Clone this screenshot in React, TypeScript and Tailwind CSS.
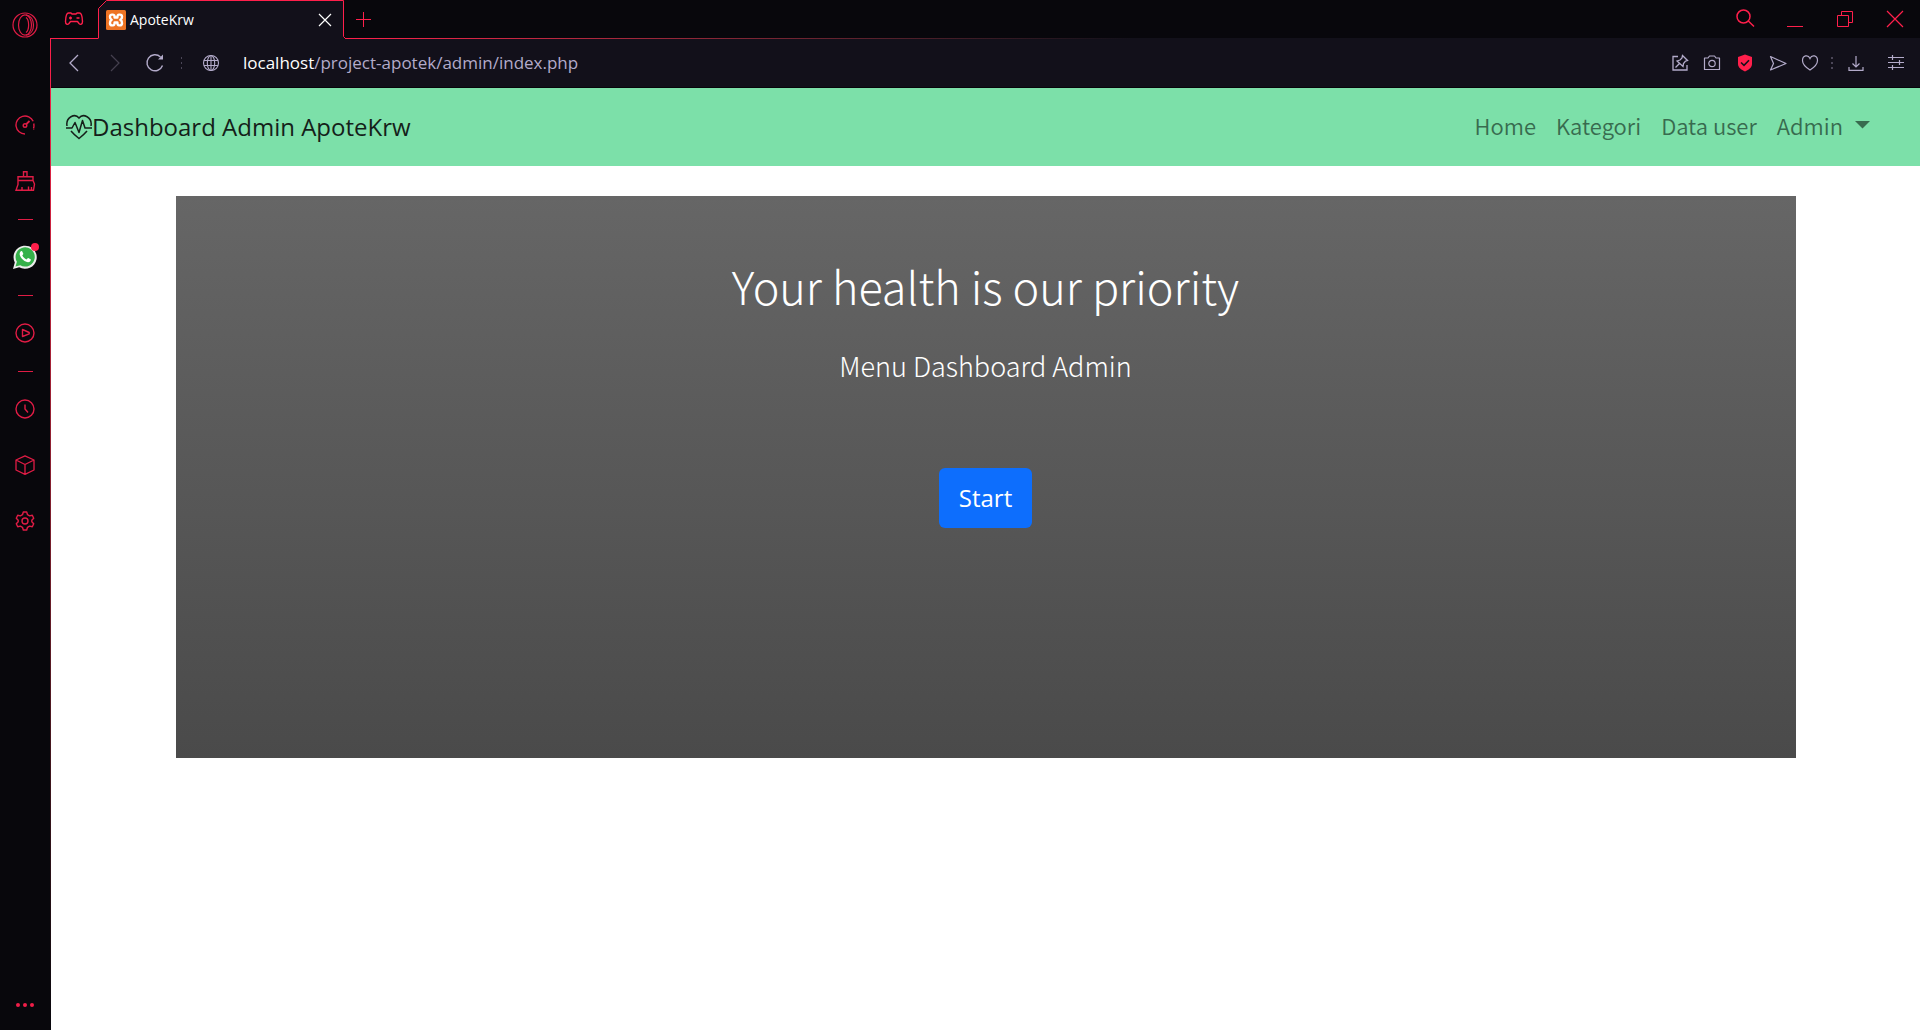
import type { ReactNode } from "react";

const segoe = "font-['Open_Sans','Noto_Sans',sans-serif]";
const source = "font-['Noto_Sans_CJK_SC','Noto_Sans',sans-serif]";

function Icon({ size = 20, stroke = 1, children }: { size?: number; stroke?: number; children: ReactNode }) {
  return (
    <svg
      width={size}
      height={size}
      viewBox={`0 0 ${size} ${size}`}
      fill="none"
      stroke="currentColor"
      strokeWidth={stroke}
      aria-hidden="true"
    >
      {children}
    </svg>
  );
}

function SideButton({ label, children }: { label: string; children: ReactNode }) {
  return (
    <button type="button" aria-label={label} className="flex h-14 w-full shrink-0 items-center justify-center">
      {children}
    </button>
  );
}

function Divider() {
  return (
    <div className="flex h-5 w-full shrink-0 items-center justify-center">
      <div className="h-px w-[15px] bg-[#e01c45]" />
    </div>
  );
}

function Sidebar() {
  return (
    <aside className="flex w-[50px] shrink-0 flex-col items-center bg-[#08070c] text-[#e01c45]">
      <button type="button" aria-label="Opera menu" className="flex h-[50px] w-full shrink-0 items-center justify-center">
        <Icon size={26} stroke={1.2}>
          <circle cx="13" cy="13" r="12" />
          <ellipse cx="13" cy="13" rx="6.5" ry="10.2" />
          <path d="M14 2.800C19 3.500 21.500 8 21.500 13S19 22.500 14 23.200M14 5.500C17.500 8 17.500 18 14 20.500" />
        </Icon>
      </button>
      <nav className="mt-[47px] flex w-full flex-col">
        <SideButton label="GX Control">
          <Icon stroke={1.4}>
            <path d="M10 19A9 9 0 1 1 18.200 6.300M18.700 8.500C19.100 10 19 11 18.800 12" />
            <path d="M18.700 12V15" strokeDasharray="1.500 1" />
            <circle cx="10" cy="10.500" r="1.800" />
            <path d="M11.300 9.200L14.500 6" strokeWidth="1.800" />
          </Icon>
        </SideButton>
        <SideButton label="GX Cleaner">
          <Icon size={22} stroke={1.4}>
            <path d="M9.500 6.500V1.700H13V6.500M4 10.500V6.700H19V10.500M4 10.500H19L20.500 14L19.500 20.300H2L4 14.500ZM8 20V17M14.500 20V16.500M17.500 20V17" />
          </Icon>
        </SideButton>
        <Divider />
        <SideButton label="WhatsApp">
          <svg width="28" height="28" viewBox="0 0 28 28" aria-hidden="true">
            <path d="M2 26L3.800 19.500A11.600 11.600 0 1 1 8.200 24.200Z" fill="#ececec" />
            <path d="M4.500 23.500L5.900 18.800A9.600 9.600 0 1 1 9.300 22.200Z" fill="#35b14a" />
            <path
              d="M9.800 8.200C10.300 7.800 11 7.900 11.300 8.500L12.300 10.700C12.500 11.200 11.500 12.100 11.300 12.500C12.200 14.400 13.600 15.600 15.600 16.400C16.100 16 16.800 14.900 17.200 15L19.600 16.200C20.200 16.600 19.600 18.200 18.800 18.800C17.200 19.800 14.500 19 12.300 17.100C9.500 14.700 7.100 10.800 9.800 8.200Z"
              fill="#fff"
            />
            <circle cx="24" cy="4" r="4" fill="#ff1f4b" />
          </svg>
        </SideButton>
        <Divider />
        <SideButton label="Player">
          <Icon stroke={1.4}>
            <circle cx="10" cy="10" r="9" />
            <path d="M7.500 6.500V13.500L14.200 10.800V9.500Z" strokeLinejoin="round" />
          </Icon>
        </SideButton>
        <Divider />
        <SideButton label="History">
          <Icon stroke={1.4}>
            <circle cx="10" cy="10" r="9" />
            <path d="M10 5.500V10L13 13.500" />
          </Icon>
        </SideButton>
        <SideButton label="Extensions">
          <Icon stroke={1.3}>
            <path d="M10 0.800L19 5V15L10 19.300L1 15V5ZM1 5L10 9.500L19 5M10 9.500V19" strokeLinejoin="round" />
          </Icon>
        </SideButton>
        <SideButton label="Settings">
          <Icon stroke={1.4}>
            <path
              d="M8.300 1H11.700L12.500 3.700L14.600 4.900L17.300 4.200L18.700 7.200L16.800 9.200V10.800L18.700 12.800L17.300 15.800L14.600 15.100L12.500 16.300L11.700 19H8.300L7.500 16.300L5.400 15.100L2.700 15.800L1.300 12.800L3.200 10.800V9.200L1.300 7.200L2.700 4.200L5.400 4.900L7.500 3.700Z"
              strokeLinejoin="round"
            />
            <circle cx="10" cy="10" r="3" />
          </Icon>
        </SideButton>
      </nav>
      <button type="button" aria-label="Sidebar setup" className="mt-auto flex h-[50px] w-full items-center justify-center gap-[3px]">
        <span className="size-1 rounded-full bg-[#f01d48]" />
        <span className="size-1 rounded-full bg-[#f01d48]" />
        <span className="size-1 rounded-full bg-[#f01d48]" />
      </button>
    </aside>
  );
}

function TabBar() {
  return (
    <header className="flex h-[39px] shrink-0 bg-[#08070c] text-[#ff1f4b]">
      <button type="button" aria-label="GX Corner" className="flex w-12 items-center justify-center border-b border-[#ff1f4b]">
        <Icon stroke={1.4}>
          <path
            d="M4.500 4H7L8 5H12L13 4H15.500C17 4 18.300 7.500 18.500 12.500C18.500 15.500 16.500 16 15 14.500L13.500 12.500H6.500L5 14.500C3.500 16 1.500 15.500 1.500 12.500C1.700 7.500 3 4 4.500 4Z"
            strokeLinejoin="round"
          />
          <path d="M5 9H8M6.500 7.500V10.500M12.500 9H15.500" />
        </Icon>
      </button>
      <div className="relative flex w-[247px] items-center">
        <svg className="absolute inset-0" width="247" height="39" viewBox="0 0 247 39" aria-hidden="true">
          <path d="M0.500 39V8.500L8.500 0.500H245.500V36.500L247 38.500V39Z" fill="#12101a" />
          <path d="M0.500 38.500V8.500L8.500 0.500H245.500V36.500L247.500 38.500" fill="none" stroke="#ff1f4b" />
        </svg>
        <a href="#tab" className={`relative flex flex-1 items-center gap-1 pl-2 text-sm text-white ${segoe}`}>
          <svg width="20" height="20" viewBox="0 0 20 20" aria-hidden="true">
            <rect width="20" height="20" rx="1.500" fill="#ee7424" />
            <path
              d="M7 4.600H6C3.500 4.600 3.200 8.500 5.700 9.800C3.200 11.200 3.500 15.400 6 15.400H7C8.500 15.400 8.600 14 8.600 12.500H11.400C11.400 14 11.500 15.400 13 15.400H14C16.500 15.400 16.800 11.200 14.300 9.800C16.800 8.500 16.500 4.600 14 4.600H13C11.500 4.600 11.400 6 11.400 7.500H8.600C8.600 6 8.500 4.600 7 4.600Z"
              fill="none"
              stroke="#fff"
              strokeWidth="2.400"
              strokeLinejoin="round"
            />
          </svg>
          ApoteKrw
        </a>
        <button type="button" aria-label="Close tab" className="relative mr-3 text-white">
          <Icon size={16} stroke={1.2}>
            <path d="M2 2L14 14M14 2L2 14" />
          </Icon>
        </button>
      </div>
      <div className="flex flex-1 flex-col">
        <div className="flex flex-1 items-center justify-between">
          <button type="button" aria-label="New tab" className="ml-2.5">
            <Icon size={16}>
              <path d="M8.500 1V16M1 8.500H16" />
            </Icon>
          </button>
          <div className="flex h-full items-center">
            <button type="button" aria-label="Search tabs" className="flex w-[50px] justify-center">
              <Icon stroke={1.5}>
                <circle cx="8.500" cy="7.500" r="6.500" />
                <path d="M13.300 12L19 17.500" />
              </Icon>
            </button>
            <button type="button" aria-label="Minimize" className="flex w-[50px] justify-center">
              <Icon size={16}>
                <path d="M0 15.500H16" />
              </Icon>
            </button>
            <button type="button" aria-label="Restore" className="flex w-[50px] justify-center">
              <Icon size={16}>
                <path d="M0.500 4.500H11.500V15.500H0.500ZM4.500 4.500V0.500H15.500V11.500H11.500" />
              </Icon>
            </button>
            <button type="button" aria-label="Close window" className="flex w-[50px] justify-center">
              <Icon size={18} stroke={1.2}>
                <path d="M1 1L17 17M17 1L1 17" />
              </Icon>
            </button>
          </div>
        </div>
        <div className="h-px bg-linear-to-r from-[#ff1f4b] to-[#12101a] to-50%" />
      </div>
    </header>
  );
}

function ToolButton({ label, children }: { label: string; children: ReactNode }) {
  return (
    <button type="button" aria-label={label} className="flex h-8 w-8 shrink-0 items-center justify-center">
      {children}
    </button>
  );
}

function Toolbar() {
  return (
    <div className="flex h-[49px] shrink-0 items-center border-b border-[#07060a] bg-[#12101a] text-[#b3abca]">
      <button type="button" aria-label="Back" className="ml-2 flex w-8 justify-center">
        <Icon stroke={1.3}>
          <path d="M13 2L5 10L13 18" />
        </Icon>
      </button>
      <button type="button" aria-label="Forward" className="ml-2 flex w-8 justify-center text-[#45404f]">
        <Icon stroke={1.2}>
          <path d="M6 2L14 10L6 18" />
        </Icon>
      </button>
      <button type="button" aria-label="Reload" className="ml-2 flex w-8 justify-center">
        <Icon stroke={1.4}>
          <path d="M17.500 12.500A8 8 0 1 1 15.500 4" />
          <path d="M18 1.500V6.500H13Z" fill="currentColor" stroke="none" />
        </Icon>
      </button>
      <div className="ml-1 flex w-3 flex-col items-center gap-[3px]">
        <span className="h-0.5 w-px bg-[#4b4657]" />
        <span className="h-0.5 w-px bg-[#4b4657]" />
        <span className="h-0.5 w-px bg-[#4b4657]" />
      </div>
      <button type="button" aria-label="Site information" className="ml-2 flex w-8 justify-center">
        <Icon size={18} stroke={1.1}>
          <circle cx="9" cy="9" r="7.500" />
          <ellipse cx="9" cy="9" rx="3.700" ry="7.500" />
          <path d="M2 6.500H16M2 11.500H16M9 1.500V16.500" />
        </Icon>
      </button>
      <p className={`ml-4 flex-1 text-[17px] leading-6 ${segoe}`}>
        <span className="text-white">localhost</span>/project-apotek/admin/index.php
      </p>
      <div className="mr-1 flex items-center">
        <ToolButton label="Pin">
          <Icon size={18} stroke={1.3}>
            <path d="M7 2.500H2V16H16V11" />
            <path d="M11.500 1.500L16.500 6.500L14.500 7L12.500 9.500L12 12.500L6 7L9 6L11 4ZM8.500 9.500L4.500 13.500" />
          </Icon>
        </ToolButton>
        <ToolButton label="Snapshot">
          <Icon size={18} stroke={1.2}>
            <path d="M1.500 4H5L6.500 2H11.500L13 4H16.500V15.500H1.500Z" strokeLinejoin="round" />
            <circle cx="9" cy="9.500" r="3.200" />
          </Icon>
        </ToolButton>
        <button type="button" aria-label="Ad blocker" className="flex h-8 w-[34px] items-center justify-center">
          <svg width="16" height="18" viewBox="0 0 16 18" aria-hidden="true">
            <path d="M8 0.500L15 3V10C15 13.500 12 15.500 8 17.500C4 15.500 1 13.500 1 10V3Z" fill="#ff1f4b" />
            <path d="M4 8.500L7 11.300L12 6.300" fill="none" stroke="#12101a" strokeWidth="1.600" />
          </svg>
        </button>
        <ToolButton label="My Flow">
          <Icon size={18} stroke={1.2}>
            <path d="M1.500 2.500L17 9.500L1.500 16L4.500 9.500Z" strokeLinejoin="round" />
          </Icon>
        </ToolButton>
        <ToolButton label="Bookmark">
          <Icon size={18} stroke={1.2}>
            <path d="M9 16C5 13.500 1.500 10.500 1.500 6.500C1.500 1.500 7 0 9 4.500C11 0 16.500 1.500 16.500 6.500C16.500 10.500 13 13.500 9 16Z" />
          </Icon>
        </ToolButton>
        <div className="flex w-3 flex-col items-center gap-[3px]">
          <span className="size-0.5 bg-[#4b4657]" />
          <span className="size-0.5 bg-[#4b4657]" />
          <span className="size-0.5 bg-[#4b4657]" />
        </div>
        <button type="button" aria-label="Downloads" className="flex h-8 w-9 items-center justify-center">
          <Icon size={16} stroke={1.2}>
            <path d="M8 1V12M4.500 8.500L8 12L11.500 8.500M1 12V15.400H15V12" />
          </Icon>
        </button>
        <button type="button" aria-label="Easy setup" className="ml-0.5 flex h-8 w-10 items-center justify-center">
          <Icon size={16} stroke={1.2}>
            <path d="M0 2.500H16M0 7.500H16M0 12.500H16M4.500 0V5M11.500 5V10M4.500 10V15" />
          </Icon>
        </button>
      </div>
    </div>
  );
}

function Navbar() {
  return (
    <nav className="flex h-[78px] shrink-0 items-center justify-between bg-[#7ce0a9] pr-[50px] pl-[15px]">
      <a href="#home" className={`flex items-center text-2xl text-[#151f1a] ${segoe}`}>
        <svg width="26" height="26" viewBox="0 0 26 26" fill="none" stroke="currentColor" strokeWidth="1.500" aria-hidden="true">
          <path d="M1 12C-0.500 3 9 -1 13 4C17 -1 26.500 3 25 12" />
          <path d="M5 17C7.500 20 10.500 22.500 13 24.500C15.500 22.500 18.500 20 21 17" />
          <path d="M0 14H6L9 8.500L13 18.500L16.500 6.500L19 14H26" strokeLinejoin="round" />
        </svg>
        Dashboard Admin ApoteKrw
      </a>
      <ul className={`flex gap-5 pb-1 text-[22px] leading-8 font-[350] text-[#386b4f] ${source}`}>
        <li><a href="#home">Home</a></li>
        <li><a href="#kategori">Kategori</a></li>
        <li><a href="#user">Data user</a></li>
        <li>
          <button type="button" className="flex items-center gap-3">
            Admin
            <svg width="15" height="8" viewBox="0 0 15 8" aria-hidden="true">
              <path d="M0 0H15L7.500 7.500Z" fill="currentColor" />
            </svg>
          </button>
        </li>
      </ul>
    </nav>
  );
}

function Hero() {
  return (
    <main className="flex-1 bg-white px-6 pt-[30px]">
      <section className="mx-auto flex min-h-[562px] w-full max-w-[1620px] flex-col items-center bg-linear-to-b from-[#666] to-[#4a4a4a] pt-16 text-white">
        <h1 className={`text-[45px] leading-[52px] font-light ${source}`}>Your health is our priority</h1>
        <p className={`mt-8 text-[27px] leading-[44px] font-light ${source}`}>Menu Dashboard Admin</p>
        <button type="button" className={`mt-20 h-[60px] rounded-md bg-[#0d6efd] px-5 text-2xl ${segoe}`}>
          Start
        </button>
      </section>
    </main>
  );
}

export default function App() {
  return (
    <div className="flex min-h-screen bg-white">
      <Sidebar />
      <div className="flex min-w-0 flex-1 flex-col">
        <TabBar />
        <div className="flex flex-1">
          <div className="w-px shrink-0 bg-linear-to-b from-[#ff1f4b] to-[#08070c]" />
          <div className="flex min-w-0 flex-1 flex-col">
            <Toolbar />
            <Navbar />
            <Hero />
          </div>
        </div>
      </div>
    </div>
  );
}
